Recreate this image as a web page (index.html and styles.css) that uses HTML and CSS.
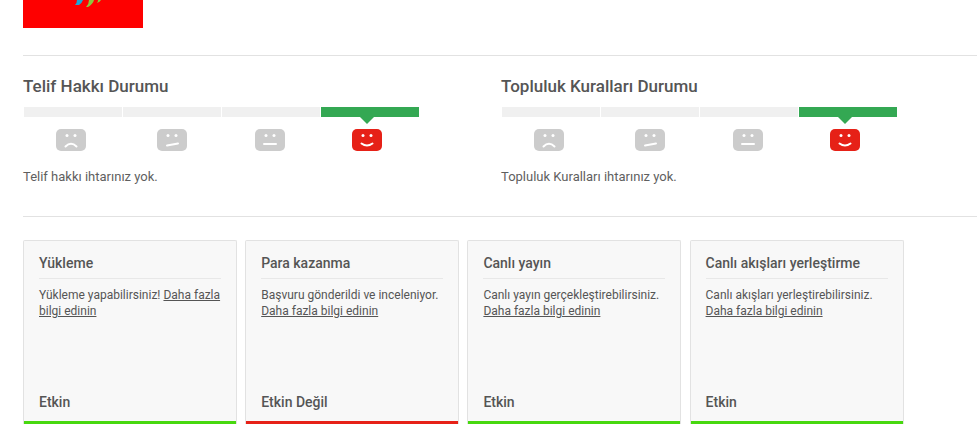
FILE: index.html
```html
<!DOCTYPE html>
<html lang="tr">
<head>
	<meta charset="UTF-8">
	<title>Kanal durumu</title>
	<link rel="stylesheet" href="styles.css">
</head>
<body>
	<div class="logo">
		<svg width="120" height="28" viewBox="0 0 120 28">
			<rect width="120" height="28" fill="#fe0000"/>
			<path d="M54 0h6q-1 3-4 5h-4q2-2 2-5z" fill="#1ba6d8"/>
			<path d="M66 0h5q-1 4-6 7h-2q3-3 3-7z" fill="#8cc63f"/>
			<path d="M75 0h3q-1 2-4 3q1-1 1-3z" fill="#8cc63f"/>
		</svg>
	</div>

	<div class="status">
		<section class="status-col">
			<h2>Telif Hakkı Durumu</h2>
			<ul class="meter">
				<li></li>
				<li></li>
				<li></li>
				<li class="active"></li>
			</ul>
			<ul class="faces">
				<li>
					<svg class="face" viewBox="0 0 30 22"><rect width="30" height="22" rx="5"/><circle cx="11" cy="6.5" r="1.5"/><circle cx="19" cy="6.5" r="1.5"/><path d="M9.5 17.5q5.5-5.5 11 0"/></svg>
				</li>
				<li>
					<svg class="face" viewBox="0 0 30 22"><rect width="30" height="22" rx="5"/><circle cx="11" cy="6.5" r="1.5"/><circle cx="19" cy="6.5" r="1.5"/><path d="M10 16.5l11-2"/></svg>
				</li>
				<li>
					<svg class="face" viewBox="0 0 30 22"><rect width="30" height="22" rx="5"/><circle cx="11" cy="6.5" r="1.5"/><circle cx="19" cy="6.5" r="1.5"/><path d="M9 15h12"/></svg>
				</li>
				<li>
					<svg class="face good" viewBox="0 0 30 22"><rect width="30" height="22" rx="5"/><circle cx="11" cy="6.5" r="1.5"/><circle cx="19" cy="6.5" r="1.5"/><path d="M9.5 14.5q5.5 4 11 0"/></svg>
				</li>
			</ul>
			<p>Telif hakkı ihtarınız yok.</p>
		</section>
		<section class="status-col">
			<h2>Topluluk Kuralları Durumu</h2>
			<ul class="meter">
				<li></li>
				<li></li>
				<li></li>
				<li class="active"></li>
			</ul>
			<ul class="faces">
				<li>
					<svg class="face" viewBox="0 0 30 22"><rect width="30" height="22" rx="5"/><circle cx="11" cy="6.5" r="1.5"/><circle cx="19" cy="6.5" r="1.5"/><path d="M9.5 17.5q5.5-5.5 11 0"/></svg>
				</li>
				<li>
					<svg class="face" viewBox="0 0 30 22"><rect width="30" height="22" rx="5"/><circle cx="11" cy="6.5" r="1.5"/><circle cx="19" cy="6.5" r="1.5"/><path d="M10 16.5l11-2"/></svg>
				</li>
				<li>
					<svg class="face" viewBox="0 0 30 22"><rect width="30" height="22" rx="5"/><circle cx="11" cy="6.5" r="1.5"/><circle cx="19" cy="6.5" r="1.5"/><path d="M9 15h12"/></svg>
				</li>
				<li>
					<svg class="face good" viewBox="0 0 30 22"><rect width="30" height="22" rx="5"/><circle cx="11" cy="6.5" r="1.5"/><circle cx="19" cy="6.5" r="1.5"/><path d="M9.5 14.5q5.5 4 11 0"/></svg>
				</li>
			</ul>
			<p>Topluluk Kuralları ihtarınız yok.</p>
		</section>
	</div>

	<div class="cards">
		<div class="card on">
			<h3>Yükleme</h3>
			<p>Yükleme yapabilirsiniz! <a href="#">Daha fazla bilgi edinin</a></p>
			<div class="card-state">Etkin</div>
		</div>
		<div class="card off">
			<h3>Para kazanma</h3>
			<p>Başvuru gönderildi ve inceleniyor. <a href="#">Daha fazla bilgi edinin</a></p>
			<div class="card-state">Etkin Değil</div>
		</div>
		<div class="card on">
			<h3>Canlı yayın</h3>
			<p>Canlı yayın gerçekleştirebilirsiniz. <a href="#">Daha fazla bilgi edinin</a></p>
			<div class="card-state">Etkin</div>
		</div>
		<div class="card on">
			<h3>Canlı akışları yerleştirme</h3>
			<p>Canlı akışları yerleştirebilirsiniz. <a href="#">Daha fazla bilgi edinin</a></p>
			<div class="card-state">Etkin</div>
		</div>
	</div>
</body>
</html>
```

FILE: styles.css
```css
body {
	margin: 0;
	padding: 0 0 0 23px;
	height: 446px;
	box-sizing: border-box;
	overflow: hidden;
	background-color: #fff;
	color: #555;
	font-family: Roboto, "Liberation Sans", sans-serif;
}
ul {
	padding: 0;
	margin: 0;
	list-style-type: none;
}

.logo {
	height: 28px;
}
.logo svg {
	display: block;
}

/*ihtar durumu*/
.status {
	display: flex;
	margin-top: 27px;
	height: 160px;
	border-top: 1px solid #e2e2e2;
	border-bottom: 1px solid #e2e2e2;
}
.status-col {
	flex: none;
	width: 478px;
}
.status-col h2 {
	margin: 21px 0 0;
	font-size: 17px;
	font-weight: 500;
	line-height: 19px;
}
.status-col p {
	margin: 18px 0 0;
	color: #5f5f5f;
	font-size: 13px;
	line-height: 16px;
}

.meter {
	display: flex;
	gap: 1px;
	margin: 11px 0 0 1px;
	width: 395px;
}
.meter li {
	position: relative;
	flex: 1;
	height: 10px;
	background-color: #f0f0f0;
}
.meter li.active {
	background-color: #34a853;
}
.meter li.active:after {
	content: "";
	position: absolute;
	top: 10px;
	left: 39px;
	border: 7px solid transparent;
	border-top-color: #34a853;
	border-bottom-width: 0;
}

.faces {
	display: flex;
	margin: 12px 0 0 33px;
}
.faces li {
	height: 22px;
}
.faces li:nth-child(2) {
	margin-left: 71px;
}
.faces li:nth-child(3) {
	margin-left: 68px;
}
.faces li:nth-child(4) {
	margin-left: 67px;
}
.face {
	display: block;
	width: 30px;
	height: 22px;
	fill: #ccc;
}
.face circle {
	fill: #fff;
}
.face path {
	fill: none;
	stroke: #fff;
	stroke-width: 2;
	stroke-linecap: round;
}
.face.good {
	fill: #e62117;
}

/*ozellik kartlari*/
.cards {
	display: flex;
	gap: 8.2px;
	margin-top: 23px;
}
.card {
	display: flex;
	flex-direction: column;
	flex: none;
	box-sizing: border-box;
	width: 214px;
	height: 184px;
	padding: 14px 15px 0;
	border: 1px solid #e2e2e2;
	border-bottom: 0;
	border-radius: 2px 2px 0 0;
	background-color: #f8f8f8;
	box-shadow: inset 0 -3px 0 #47d80f;
}
.card.off {
	box-shadow: inset 0 -3px 0 #e62117;
}
.card h3 {
	margin: 0;
	padding-bottom: 6px;
	border-bottom: 1px solid #e8e8e8;
	font-size: 14px;
	font-weight: 500;
	line-height: 17px;
}
.card p {
	margin: 0;
	padding-top: 8px;
	font-size: 12px;
	line-height: 16px;
}
.card a {
	color: #555;
}
.card-state {
	margin-top: auto;
	padding-bottom: 13px;
	font-size: 14px;
	font-weight: 500;
	line-height: 17px;
}
```
